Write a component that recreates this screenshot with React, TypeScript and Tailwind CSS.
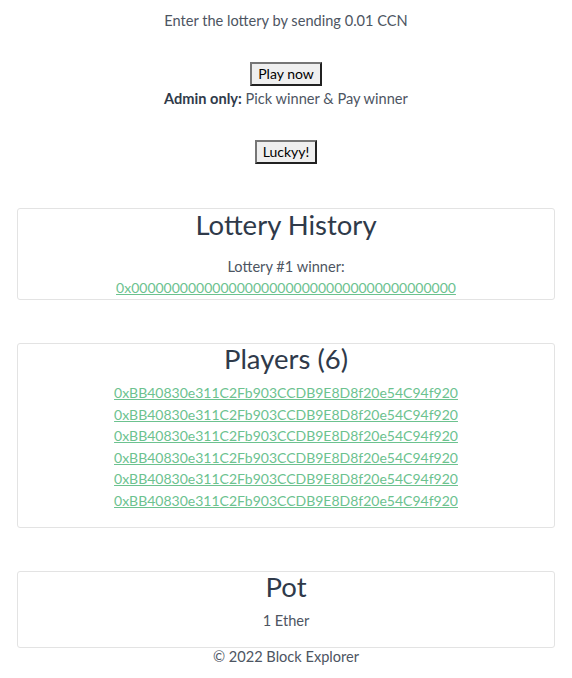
import React from "react";

const players: string[] = Array(6).fill("0xBB40830e311C2Fb903CCDB9E8D8f20e54C94f920");

const Card: React.FC<{ title: string; className?: string; children: React.ReactNode }> = ({
  title,
  className,
  children,
}) => (
  <div className={"mx-[17px] rounded-[3px] border border-[#e3e3e3] bg-white text-center " + (className ?? "")}>
    <h2 className="text-[27.5px] leading-[30px] text-[#2f3a4a]">{title}</h2>
    {children}
  </div>
);

const App: React.FC = () => {
  return (
    <div className="min-h-[678px] bg-white font-['Lato',sans-serif] text-[14.6px] leading-[21px] text-[#4d5562]">
      <p className="pt-[10px] text-center">Enter the lottery by sending 0.01 CCN</p>

      <div className="mt-[31px] flex flex-col items-center">
        <button className="h-[24px] border-2 border-[#767676] bg-[#efefef] px-[6px] text-[14px] leading-[20px] text-black [border-style:outset]">
          Play now
        </button>
        <p className="mt-[2px]">
          <span className="font-bold text-[#2f3a4a]">Admin only:</span> Pick winner &amp; Pay winner
        </p>
        <button className="mt-[31px] h-[24px] border-2 border-[#767676] bg-[#efefef] px-[5.5px] text-[14px] leading-[20px] text-black [border-style:outset]">
          Luckyy!
        </button>
      </div>

      <Card title="Lottery History" className="mt-[44px] pb-[1px] pt-[1px]">
        <p className="mt-[16px]">Lottery #1 winner:</p>
        <a href="#" className="text-[14px] text-[#6cc28f] underline">
          0x0000000000000000000000000000000000000000
        </a>
      </Card>

      <Card title="Players (6)" className="mt-[43px] pb-[16px]">
        <div className="mt-[8px] flex flex-col items-center">
          {players.map((p, i) => (
            <a key={i} href="#" className="text-[14px] leading-[21.5px] text-[#6cc28f] underline">
              {p}
            </a>
          ))}
        </div>
      </Card>

      <Card title="Pot" className="mt-[43px] pb-[16px]">
        <p className="mt-[8px]">1 Ether</p>
      </Card>

      <p className="text-center leading-[18px]">© 2022 Block Explorer</p>
    </div>
  );
};

export default App;
